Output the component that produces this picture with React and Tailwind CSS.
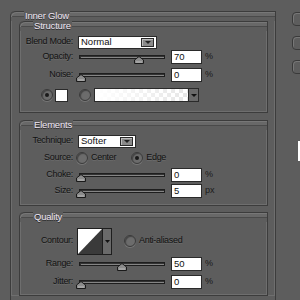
const FONT = { fontFamily: '"Liberation Sans", Arial, sans-serif' };

function Group({ title, className, children }) {
  return (
    <div className={`border-l border-b border-r border-[#3c3c3c] rounded-tl-[5px] ${className}`}>
      <div className="relative h-[10px]">
        <div className="absolute inset-x-0 top-0 h-[6px] border-t border-[#3c3c3c] bg-[#686868] rounded-tl-[5px] shadow-[inset_1px_1px_0_#777,inset_0_-1px_0_#4a4a4a]" />
        <span className="absolute left-[13px] top-[0px] px-[1px] text-[9.5px] leading-[10px] tracking-[-0.2px] whitespace-nowrap text-[#eee6f4] bg-[#5d5d5d] [text-shadow:0_1px_0_#2a2a2a]">
          {title}
        </span>
      </div>
      <div className="border-l border-[#6e6e6e] shadow-[inset_-1px_-1px_0_#6e6e6e]">{children}</div>
    </div>
  );
}

function Label({ children }) {
  return (
    <span className="w-[52px] text-right whitespace-nowrap text-[9px] tracking-[-0.3px] text-[#121212] [text-shadow:0_1px_0_#6c6c6c] shrink-0">
      {children}
    </span>
  );
}

function Slider({ pos }) {
  return (
    <div className="relative w-[86px] h-[4px] border border-[#1e1e1e] bg-[#858585] shadow-[inset_1px_1px_0_#333]">
      <svg className="absolute top-[0px]" style={{ left: pos - 5 }} width="10" height="8" viewBox="0 0 10 8">
        <path d="M5 0.5 L9.5 4 L9.5 7.5 L0.5 7.5 L0.5 4 Z" fill="#8c8c8c" stroke="#1a1a1a" />
        <path d="M2 6 L8 6" stroke="#bbb" />
      </svg>
    </div>
  );
}

function NumBox({ value, unit }) {
  return (
    <div className="flex items-center">
      <div className="w-[31px] h-[14px] bg-white border border-[#2a2a2a] text-[9.5px] leading-[12px] pl-[2px] text-[#111]">
        {value}
      </div>
      <span className="ml-[3px] text-[9px] text-[#1a1a1a]">{unit}</span>
    </div>
  );
}

function Radio({ checked }) {
  return (
    <div className="w-[12px] h-[12px] rounded-full border border-[#3a3a3a] bg-[#6c6c6c] shadow-[inset_1px_1px_1px_#444,0_1px_0_#777] flex items-center justify-center">
      {checked && <div className="w-[4px] h-[4px] rounded-full bg-[#1a1a1a]" />}
    </div>
  );
}

function DropBtn() {
  return (
    <div className="w-[13px] h-[9px] border border-[#2a2a2a] bg-[#8a8a8a] shadow-[inset_1px_1px_0_#bbb] flex items-center justify-center">
      <svg width="6" height="3" viewBox="0 0 6 3">
        <path d="M0 0 H6 L3 3 Z" fill="#222" />
      </svg>
    </div>
  );
}

function SliderRow({ label, pos, value, unit, h }) {
  return (
    <div className={`flex items-center ${h}`}>
      <Label>{label}</Label>
      <div className="ml-[6px]">
        <Slider pos={pos} />
      </div>
      <div className="ml-[6px]">
        <NumBox value={value} unit={unit} />
      </div>
    </div>
  );
}

function Text({ children, className = "" }) {
  return (
    <span className={`text-[9px] tracking-[-0.3px] whitespace-nowrap text-[#121212] [text-shadow:0_1px_0_#6c6c6c] ${className}`}>
      {children}
    </span>
  );
}

export default function App() {
  return (
    <div style={FONT} className="w-[300px] h-[300px] bg-[#5d5d5d] overflow-hidden flex">
      <div className="pl-[10px] pt-[11px] shrink-0">
        <Group title="Inner Glow" className="w-[266px] h-[300px]">
          <div className="pl-[7px] pr-[8px] pt-[0px]">
            <Group title="Structure" className="w-[249px]">
              <div className="pt-[4px] pb-[6px]">
                <div className="flex items-center h-[14px]">
                  <Label>Blend Mode:</Label>
                  <div className="ml-[5px] w-[79px] h-[13px] bg-white border border-[#2a2a2a] flex items-center justify-between pl-[2px] pr-[2px]">
                    <span className="text-[9.5px] text-[#111]">Normal</span>
                    <DropBtn />
                  </div>
                </div>
                <SliderRow label="Opacity:" pos={59} value="70" unit="%" h="h-[16px]" />
                <SliderRow label="Noise:" pos={1} value="0" unit="%" h="h-[19px]" />
                <div className="flex items-center h-[22px]">
                  <div className="ml-[20px]">
                    <Radio checked />
                  </div>
                  <div className="ml-[2px] w-[13px] h-[13px] bg-white border border-[#2a2a2a]" />
                  <div className="ml-[11px]">
                    <Radio />
                  </div>
                  <div className="ml-[3px] flex h-[14px] border border-[#2a2a2a]">
                    <div className="w-[93px] bg-[linear-gradient(to_right,#fff_0%,rgba(255,255,255,0.55)_100%),repeating-conic-gradient(#c8c8c8_0_25%,#fff_0_50%)] bg-[length:100%_100%,8px_8px]" />
                    <div className="w-[10px] bg-[#6a6a6a] border-l border-[#2a2a2a] flex items-center justify-center">
                      <svg width="6" height="3" viewBox="0 0 6 3">
                        <path d="M0 0 H6 L3 3 Z" fill="#111" />
                      </svg>
                    </div>
                  </div>
                </div>
              </div>
            </Group>
            <Group title="Elements" className="w-[249px] mt-[7px]">
              <div className="pt-[3px] pb-[6px]">
                <div className="flex items-center h-[16px]">
                  <Label>Technique:</Label>
                  <div className="ml-[5px] w-[58px] h-[13px] bg-white border border-[#2a2a2a] flex items-center justify-between pl-[2px] pr-[2px]">
                    <span className="text-[9.5px] text-[#111]">Softer</span>
                    <DropBtn />
                  </div>
                </div>
                <div className="flex items-center h-[18px]">
                  <Label>Source:</Label>
                  <div className="ml-[3px]">
                    <Radio />
                  </div>
                  <Text className="ml-[3px]">Center</Text>
                  <div className="ml-[15px]">
                    <Radio checked />
                  </div>
                  <Text className="ml-[3px]">Edge</Text>
                </div>
                <SliderRow label="Choke:" pos={1} value="0" unit="%" h="h-[15px]" />
                <SliderRow label="Size:" pos={1} value="5" unit="px" h="h-[17px]" />
              </div>
            </Group>
            <Group title="Quality" className="w-[249px] mt-[6px]">
              <div className="pt-[5px] pb-[3px]">
                <div className="flex items-center h-[28px]">
                  <Label>Contour:</Label>
                  <div className="ml-[4px] flex h-[27px] border border-[#1e1e1e]">
                    <svg width="24" height="25" viewBox="0 0 24 25">
                      <rect width="24" height="25" fill="#fff" />
                      <path d="M24 0 L24 25 L0 25 Z" fill="#3a3a3a" />
                    </svg>
                    <div className="w-[9px] bg-[#6a6a6a] border-l border-[#1e1e1e] flex items-center justify-center">
                      <svg width="5" height="3" viewBox="0 0 5 3">
                        <path d="M0 0 H5 L2.5 3 Z" fill="#111" />
                      </svg>
                    </div>
                  </div>
                  <div className="ml-[12px]">
                    <Radio />
                  </div>
                  <Text className="ml-[3px]">Anti-aliased</Text>
                </div>
                <SliderRow label="Range:" pos={42} value="50" unit="%" h="h-[17px]" />
                <SliderRow label="Jitter:" pos={1} value="0" unit="%" h="h-[20px]" />
              </div>
            </Group>
          </div>
        </Group>
      </div>
      <div className="ml-[16px] pt-[12px] flex flex-col gap-[10px] shrink-0">
        <div className="w-[14px] h-[14px] rounded-[4px] border border-[#3a3a3a] shadow-[inset_1px_1px_0_#777]" />
        <div className="w-[14px] h-[14px] rounded-[4px] border border-[#3a3a3a] shadow-[inset_1px_1px_0_#777]" />
        <div className="w-[14px] h-[14px] rounded-[4px] border border-[#3a3a3a] shadow-[inset_1px_1px_0_#777]" />
        <div className="mt-[57px] ml-[6px] w-[2px] h-[20px] bg-white" />
      </div>
    </div>
  );
}
